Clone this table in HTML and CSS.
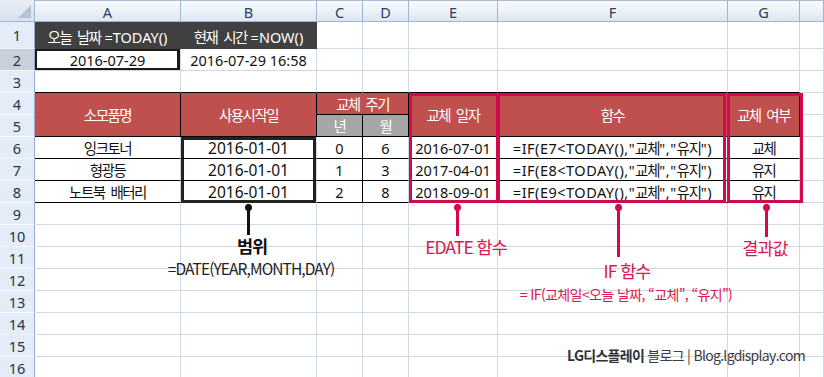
FILE: index.html
```html
<!DOCTYPE html>
<html lang="ko">
<head>
<meta charset="utf-8">
<title>Excel EDATE</title>
<link rel="stylesheet" href="styles.css">
</head>
<body>
<div class="sheet">
  <div class="grid">
    <div class="corner"><span class="tri"></span></div>
    <div class="ch">A</div><div class="ch">B</div><div class="ch">C</div><div class="ch">D</div><div class="ch">E</div><div class="ch">F</div><div class="ch">G</div><div class="ch"></div>

    <div class="rh">1</div>
    <div class="c dark"><span><span class="ko">오늘 날짜</span> =TODAY()</span></div>
    <div class="c dark"><span><span class="ko">현재 시간</span> =NOW()</span></div>
    <div class="c"></div><div class="c"></div><div class="c"></div><div class="c"></div><div class="c"></div><div class="c"></div>

    <div class="rh sel">2</div>
    <div class="c active">2016-07-29</div>
    <div class="c">2016-07-29 16:58</div>
    <div class="c"></div><div class="c"></div><div class="c"></div><div class="c"></div><div class="c"></div><div class="c"></div>

    <div class="rh">3</div>
    <div class="c bb"></div><div class="c bb"></div><div class="c bb"></div><div class="c bb"></div><div class="c bb"></div><div class="c bb"></div><div class="c bb"></div><div class="c"></div>

    <div class="rh">4</div>
    <div class="c red tall ko">소모품명</div>
    <div class="c red tall ko">사용시작일</div>
    <div class="c red wide ko">교체 주기</div>
    <div class="c red tall ko">교체 일자</div>
    <div class="c red tall ko">함수</div>
    <div class="c red tall ko">교체 여부</div>
    <div class="c"></div>

    <div class="rh">5</div>
    <div class="c gray ko">년</div>
    <div class="c gray ko">월</div>
    <div class="c"></div>

    <div class="rh">6</div>
    <div class="c data ko">잉크토너</div>
    <div class="c data big box-top">2016-01-01</div>
    <div class="c data br">0</div>
    <div class="c data">6</div>
    <div class="c data">2016-07-01</div>
    <div class="c data formula">=IF(E7&lt;TODAY(),"<span class="ko">교체</span>","<span class="ko">유지</span>")</div>
    <div class="c data ko">교체</div>
    <div class="c"></div>

    <div class="rh">7</div>
    <div class="c data ko">형광등</div>
    <div class="c data big box-mid">2016-01-01</div>
    <div class="c data br">1</div>
    <div class="c data">3</div>
    <div class="c data">2017-04-01</div>
    <div class="c data formula">=IF(E8&lt;TODAY(),"<span class="ko">교체</span>","<span class="ko">유지</span>")</div>
    <div class="c data ko">유지</div>
    <div class="c"></div>

    <div class="rh">8</div>
    <div class="c data ko">노트북 배터리</div>
    <div class="c data big box-bot">2016-01-01</div>
    <div class="c data br">2</div>
    <div class="c data">8</div>
    <div class="c data">2018-09-01</div>
    <div class="c data formula">=IF(E9&lt;TODAY(),"<span class="ko">교체</span>","<span class="ko">유지</span>")</div>
    <div class="c data ko">유지</div>
    <div class="c"></div>

    <div class="rh">9</div><div class="c"></div><div class="c"></div><div class="c"></div><div class="c"></div><div class="c"></div><div class="c"></div><div class="c"></div><div class="c"></div>
    <div class="rh">10</div><div class="c"></div><div class="c"></div><div class="c"></div><div class="c"></div><div class="c"></div><div class="c"></div><div class="c"></div><div class="c"></div>
    <div class="rh">11</div><div class="c"></div><div class="c"></div><div class="c"></div><div class="c"></div><div class="c"></div><div class="c"></div><div class="c"></div><div class="c"></div>
    <div class="rh">12</div><div class="c"></div><div class="c"></div><div class="c"></div><div class="c"></div><div class="c"></div><div class="c"></div><div class="c"></div><div class="c"></div>
    <div class="rh">13</div><div class="c"></div><div class="c"></div><div class="c"></div><div class="c"></div><div class="c"></div><div class="c"></div><div class="c"></div><div class="c"></div>
    <div class="rh">14</div><div class="c"></div><div class="c"></div><div class="c"></div><div class="c"></div><div class="c"></div><div class="c"></div><div class="c"></div><div class="c"></div>
    <div class="rh">15</div><div class="c"></div><div class="c"></div><div class="c"></div><div class="c"></div><div class="c"></div><div class="c"></div><div class="c"></div><div class="c"></div>
    <div class="rh">16</div><div class="c"></div><div class="c"></div><div class="c"></div><div class="c"></div><div class="c"></div><div class="c"></div><div class="c"></div><div class="c"></div>
  </div>

  <!-- annotation overlay -->
  <div class="frame frame-e"></div>
  <div class="frame frame-f"></div>
  <div class="frame frame-g"></div>

  <div class="pin pin-b"></div>
  <div class="pin pin-e"></div>
  <div class="pin pin-f"></div>
  <div class="pin pin-g"></div>

  <div class="note note-b">범위</div>
  <div class="sub sub-b">=DATE(YEAR,MONTH,DAY)</div>
  <div class="note red-note note-e">EDATE 함수</div>
  <div class="note red-note note-f">IF 함수</div>
  <div class="sub red-note sub-f">= IF(교체일&lt;오늘 날짜, “교체”, “유지”)</div>
  <div class="note red-note note-g">결과값</div>

  <div class="brand"><b>LG디스플레이</b> 블로그 | Blog.lgdisplay.com</div>
</div>
</body>
</html>
```
FILE: styles.css
```css
html, body {
  margin: 0;
  padding: 0;
  background: #fff;
  overflow: hidden;
}

.sheet {
  position: relative;
  width: 824px;
  height: 377px;
  overflow: hidden;
  font-family: "Noto Sans", "Noto Sans CJK KR", sans-serif;
  font-size: 14.5px;
  color: #111;
}

.grid {
  display: grid;
  grid-template-columns: 35px 146px 136px 46px 46px 89px 230px 72px 24px;
  grid-template-rows: 22px 27px repeat(15, 22px);
}

.ko {
  letter-spacing: -1.5px;
  word-spacing: 3.5px;
}

/* headers */
.corner {
  position: relative;
  box-sizing: border-box;
  background: linear-gradient(#e9eef5, #d7e0eb);
  border-right: 1px solid #9eb6ce;
  border-bottom: 1px solid #9eb6ce;
}
.tri {
  position: absolute;
  right: 3px;
  bottom: 3px;
  width: 0;
  height: 0;
  border-left: 13px solid transparent;
  border-bottom: 13px solid #b5c3d6;
}
.ch {
  box-sizing: border-box;
  display: flex;
  align-items: center;
  justify-content: center;
  background: linear-gradient(#f8fafd 0%, #eef2f8 50%, #dde5ef 100%);
  border-top: 1px solid #a9bdd4;
  border-right: 1px solid #9eb6ce;
  border-bottom: 1px solid #9eb6ce;
  color: #27415f;
  font-size: 14.5px;
  padding-top: 1px;
}
.rh {
  box-sizing: border-box;
  display: flex;
  align-items: center;
  justify-content: center;
  background: #e4ecf7;
  border-right: 1px solid #9aa8d8;
  border-bottom: 1px solid #f4f7fb;
  color: #27334a;
  font-size: 14.5px;
}
.rh.sel { background: #c8d0dc; }

/* cells */
.c {
  box-sizing: border-box;
  display: flex;
  align-items: center;
  justify-content: center;
  white-space: nowrap;
  border-right: 1px solid #d0d7e5;
  border-bottom: 1px solid #d0d7e5;
}
.dark {
  background: #404040;
  color: #fff;
  border-color: #404040;
  padding-top: 2px;
}
.active {
  box-shadow: inset 2px 2px 0 #1a1a1a, inset -3px -2px 0 #1a1a1a;
}
.bb { border-bottom-color: #000; }
.red {
  background: #c0504d;
  color: #fff;
  border-right-color: #000;
  border-bottom-color: #000;
}
.tall { grid-row: span 2; }
.wide { grid-column: span 2; }
.gray {
  background: #a6a6a6;
  color: #fff;
  border-right-color: #000;
  border-bottom-color: #000;
}
.data { border-bottom-color: #000; }
.big { font-size: 15.5px; }
.formula { letter-spacing: 0.5px; }
.formula .ko { letter-spacing: -1.2px; }
.br { border-right-color: #000; }
.box-top { box-shadow: inset 3px 3px 0 #222, inset -3px 0 0 #222; }
.box-mid { box-shadow: inset 3px 0 0 #222, inset -3px 0 0 #222; }
.box-bot { box-shadow: inset 3px 0 0 #222, inset -3px -2px 0 #222; border-bottom: 1px solid #222; }

/* annotation overlay */
.frame {
  position: absolute;
  top: 93px;
  height: 110px;
  box-sizing: border-box;
  border: 3px solid #d4084c;
}
.frame-e { left: 409px; width: 90px; }
.frame-f { left: 497px; width: 229px; }
.frame-g { left: 727px; width: 76px; }

.pin {
  position: absolute;
  top: 204px;
  width: 3px;
  background: #d4084c;
}
.pin::before {
  content: "";
  position: absolute;
  left: -2px;
  top: 0;
  width: 7px;
  height: 7px;
  border-radius: 50%;
  background: inherit;
}
.pin-b { left: 247px; height: 31px; background: #111; }
.pin-e { left: 456px; height: 32px; }
.pin-f { left: 617px; height: 53px; }
.pin-g { left: 765px; height: 33px; }

.note, .sub {
  position: absolute;
  white-space: nowrap;
  transform: translateX(-50%);
  font-family: "Noto Sans CJK KR", "Noto Sans", sans-serif;
}
.note {
  font-size: 17.5px;
  line-height: 20px;
  letter-spacing: -1px;
}
.sub {
  font-size: 15.5px;
  line-height: 18px;
  letter-spacing: -0.9px;
}
.red-note { color: #dc1650; }
.note-b { left: 252px; top: 236px; font-weight: 700; color: #111; }
.sub-b { left: 251px; top: 259px; color: #222; }
.note-e { left: 466px; top: 237px; }
.note-f { left: 627px; top: 261px; }
.sub-f { left: 626px; top: 285px; font-size: 14px; letter-spacing: -0.6px; }
.note-g { left: 765px; top: 238px; }

.brand {
  position: absolute;
  right: 19px;
  top: 346px;
  font-family: "Noto Sans CJK KR", "Noto Sans", sans-serif;
  font-size: 14px;
  line-height: 18px;
  letter-spacing: -0.7px;
  color: #3c3c3c;
  white-space: nowrap;
}
.brand b { font-weight: 700; color: #333; }
```
